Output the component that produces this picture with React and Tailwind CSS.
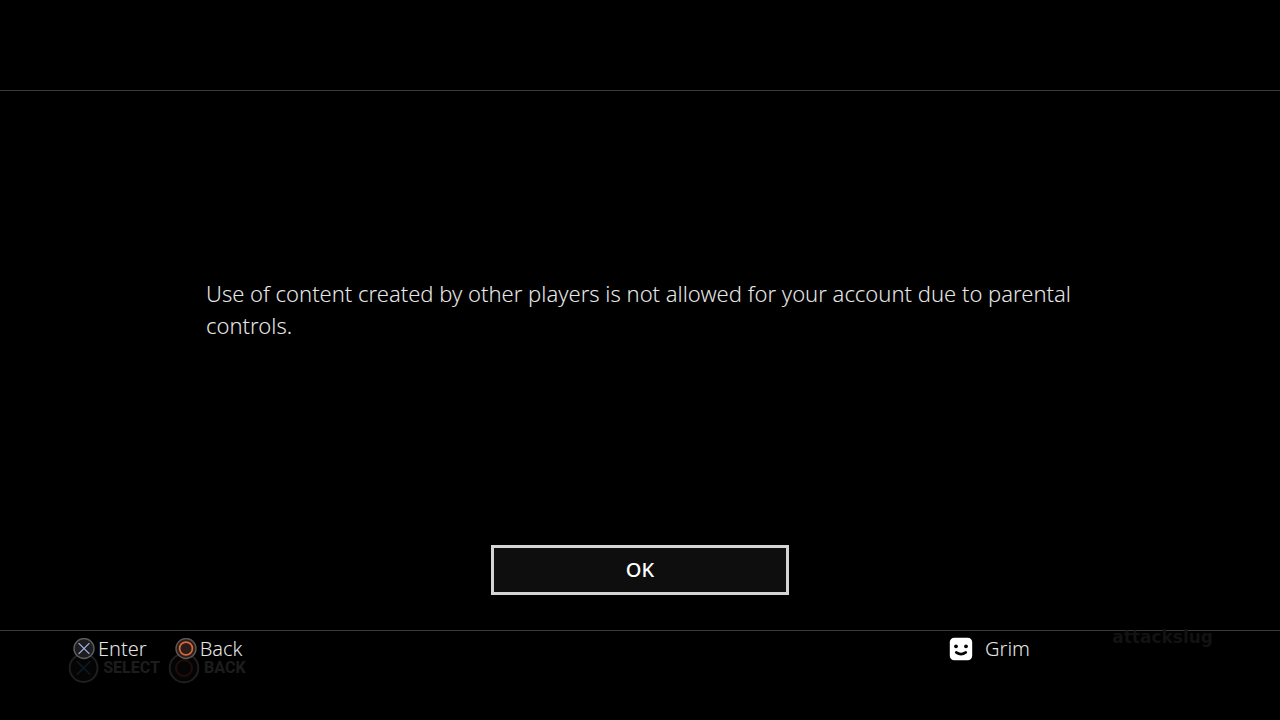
import React from "react";

function CrossIcon() {
  return (
    <svg viewBox="0 0 22 22" className="size-[22px]" aria-hidden="true">
      <circle cx="11" cy="10.5" r="10" fill="#1d1d20" stroke="#5c5c5e" strokeWidth="1.4" />
      <path d="M5.6 5.1 L16.4 15.9 M16.4 5.1 L5.6 15.9" stroke="#9db0dc" strokeWidth="1.3" />
    </svg>
  );
}

function CircleIcon() {
  return (
    <svg viewBox="0 0 22 22" className="size-[22px]" aria-hidden="true">
      <circle cx="11" cy="10.5" r="10" fill="#2a1c18" stroke="#5c5654" strokeWidth="1.4" />
      <circle cx="11" cy="10.5" r="6.4" fill="none" stroke="#d9673c" strokeWidth="1.7" />
    </svg>
  );
}

function GhostCrossIcon() {
  return (
    <svg viewBox="0 0 32 32" className="size-8" aria-hidden="true">
      <circle cx="16" cy="16" r="14.3" fill="#040404" stroke="#1f1f1f" strokeWidth="2" />
      <path d="M9 9 L23 23 M23 9 L9 23" stroke="#0d171e" strokeWidth="2" />
    </svg>
  );
}

function GhostCircleIcon() {
  return (
    <svg viewBox="0 0 32 32" className="size-8" aria-hidden="true">
      <circle cx="16" cy="16" r="14.3" fill="#040404" stroke="#1f1f1f" strokeWidth="2" />
      <circle cx="16" cy="16" r="8" fill="none" stroke="#210e0e" strokeWidth="2" />
    </svg>
  );
}

function AvatarIcon() {
  return (
    <svg viewBox="0 0 24 24" className="size-6" aria-hidden="true">
      <rect x="0.8" y="0.8" width="22.4" height="22.4" rx="4.5" fill="#ffffff" />
      <circle cx="7" cy="9.3" r="1.9" fill="#050505" />
      <circle cx="17" cy="9.3" r="1.9" fill="#050505" />
      <path d="M7.2 15.4 Q12 18.8 16.8 15.4" fill="none" stroke="#050505" strokeWidth="2.6" strokeLinecap="round" />
    </svg>
  );
}

export default function App() {
  return (
    <div className="flex min-h-screen flex-col bg-black font-['Noto_Sans',sans-serif] font-light text-[#e6e6e6]">
      <header className="h-[91px] border-b border-[#3a3a3a]" />

      <main className="flex flex-1 flex-col items-center px-10 pb-[35px]">
        <div className="flex w-full max-w-[868px] flex-1 items-center">
          <p className="text-[22px] leading-8">
            Use of content created by other players is not allowed for your account due to parental controls.
          </p>
        </div>
        <button
          type="button"
          className="mt-[18px] h-[50px] w-[298px] border-3 border-[#d4d4d4] bg-[#0e0e0e] text-xl font-medium text-white"
        >
          OK
        </button>
      </main>

      <footer className="relative h-[90px] border-t border-[#3a3a3a] pr-[250px] pl-[73px]">
        {/* Faded game menu behind the system bar */}
        <div className="absolute top-[21px] left-[68px] flex gap-2 font-['Roboto',sans-serif] text-base font-extrabold text-[#1c1c1c]">
          <span className="flex w-[92px] items-center gap-1">
            <GhostCrossIcon />
            SELECT
          </span>
          <span className="flex items-center gap-1">
            <GhostCircleIcon />
            BACK
          </span>
        </div>
        <span className="absolute -top-[6px] right-[67px] font-['DejaVu_Sans',sans-serif] text-[17px] leading-6 font-bold text-[#121212]">
          attackslug
        </span>

        <div className="relative flex items-center justify-between pt-[2px] text-xl leading-8">
          <div className="flex gap-7">
            <button type="button" className="flex items-center gap-[3px]">
              <CrossIcon />
              Enter
            </button>
            <button type="button" className="flex items-center gap-[3px]">
              <CircleIcon />
              Back
            </button>
          </div>
          <div className="flex items-center gap-3">
            <AvatarIcon />
            <span>Grim</span>
          </div>
        </div>
      </footer>
    </div>
  );
}
